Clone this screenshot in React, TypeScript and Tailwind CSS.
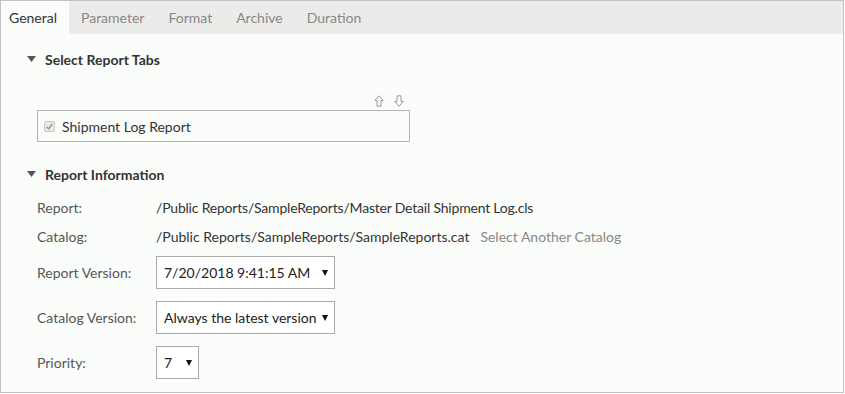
import React from "react";

const Tri = () => (
  <svg width="9" height="6" viewBox="0 0 9 6" className="shrink-0">
    <path d="M0 0 L9 0 L4.5 6 Z" fill="#555" />
  </svg>
);

const Caret = () => (
  <svg width="6" height="6" viewBox="0 0 6 6" className="shrink-0">
    <path d="M0 0 L6 0 L3 6 Z" fill="#111" />
  </svg>
);

const ArrowUp = () => (
  <svg width="10" height="12" viewBox="0 0 10 12">
    <path d="M5 0.8 L9.2 5.5 L7 5.5 L7 11.2 L3 11.2 L3 5.5 L0.8 5.5 Z" fill="none" stroke="#999" strokeWidth="1" />
  </svg>
);
const ArrowDown = () => (
  <svg width="10" height="12" viewBox="0 0 10 12">
    <path d="M5 11.2 L9.2 6.5 L7 6.5 L7 0.8 L3 0.8 L3 6.5 L0.8 6.5 Z" fill="none" stroke="#999" strokeWidth="1" />
  </svg>
);

function Select({ value, width }: { value: string; width: string }) {
  return (
    <div className={`${width} h-[33px] border border-[#aaaaaa] bg-white flex items-center justify-between pl-[7px] pr-[6px]`}>
      <span className="text-[14px] text-[#222] whitespace-nowrap">{value}</span>
      <Caret />
    </div>
  );
}

export default function App() {
  const tabs = ["Parameter", "Format", "Archive", "Duration"];
  return (
    <div
      className="w-[845px] h-[394px] bg-white"
      style={{ fontFamily: "Lato, 'Open Sans', sans-serif" }}
    >
      <div className="w-[844px] h-[393px] border border-[#c3c1c7] bg-[#fbfdfb] flex flex-col">
        <div className="h-[33px] bg-[#ebecea] flex items-stretch">
          <div className="bg-[#fbfdfb] pl-[8px] pr-[12px] flex items-center text-[14px] text-[#333]">General</div>
          {tabs.map((t) => (
            <div key={t} className="px-[12px] flex items-center text-[14px] text-[#888]">
              {t}
            </div>
          ))}
        </div>

        <div className="pl-[26px] pt-[16px] flex flex-col">
          <div className="flex items-center gap-[9px] h-[18px]">
            <Tri />
            <span className="text-[14px] font-bold text-[#333]">Select Report Tabs</span>
          </div>

          <div className="w-[383px] pl-[10px] mt-[27px] flex flex-col">
            <div className="flex justify-end gap-[10px] pr-[6px] h-[13px]">
              <ArrowUp />
              <ArrowDown />
            </div>
            <div className="mt-[2px] w-[373px] h-[32px] border border-[#b5b5b5] bg-[#fbfdfb] flex items-center pl-[6px]">
              <span className="w-[11px] h-[11px] border border-[#c8c8c8] bg-[#e8e8e8] rounded-[2px] flex items-center justify-center">
                <svg width="9" height="9" viewBox="0 0 9 9">
                  <path d="M1.5 4.8 L3.6 6.8 L7.5 2" fill="none" stroke="#9a9a9a" strokeWidth="1.5" />
                </svg>
              </span>
              <span className="ml-[7px] text-[14px] text-[#333]">Shipment Log Report</span>
            </div>
          </div>

          <div className="flex items-center gap-[9px] h-[18px] mt-[23px]">
            <Tri />
            <span className="text-[14px] font-bold text-[#333]">Report Information</span>
          </div>

          <div className="pl-[10px] mt-[16px] flex flex-col text-[14px] text-[#333]">
            <div className="flex items-center h-[17px]">
              <span className="w-[119px] text-[#555]">Report:</span>
              <span className="tracking-[-0.2px]">/Public Reports/SampleReports/Master Detail Shipment Log.cls</span>
            </div>
            <div className="flex items-center h-[17px] mt-[12px]">
              <span className="w-[119px] text-[#555]">Catalog:</span>
              <span>/Public Reports/SampleReports/SampleReports.cat</span>
              <span className="ml-[11px] text-[#888]">Select Another Catalog</span>
            </div>
            <div className="flex items-center mt-[11px]">
              <span className="w-[119px] text-[#555]">Report Version:</span>
              <Select value="7/20/2018 9:41:15 AM" width="w-[179px]" />
            </div>
            <div className="flex items-center mt-[12px]">
              <span className="w-[119px] text-[#555]">Catalog Version:</span>
              <Select value="Always the latest version" width="w-[179px]" />
            </div>
            <div className="flex items-center mt-[12px]">
              <span className="w-[119px] text-[#555]">Priority:</span>
              <Select value="7" width="w-[43px]" />
            </div>
          </div>
        </div>
      </div>
    </div>
  );
}
